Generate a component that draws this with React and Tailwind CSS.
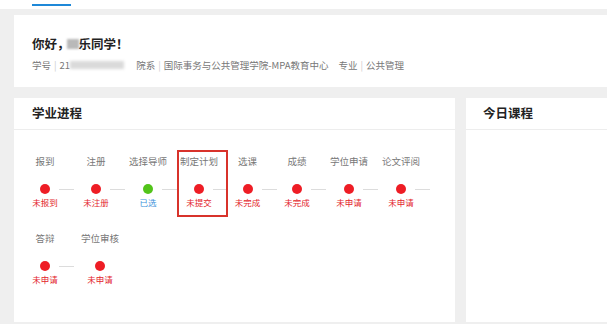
import React from 'react';

const rowOne = [
  { label: '报到', status: '未报到', w: 'w-[50px]', state: 'todo' },
  { label: '注册', status: '未注册', w: 'w-[52px]', state: 'todo' },
  { label: '选择导师', status: '已选', w: 'w-[52px]', state: 'done' },
  { label: '制定计划', status: '未提交', w: 'w-[50px]', state: 'todo' },
  { label: '选课', status: '未完成', w: 'w-[47px]', state: 'todo' },
  { label: '成绩', status: '未完成', w: 'w-[52px]', state: 'todo' },
  { label: '学位申请', status: '未申请', w: 'w-[52px]', state: 'todo' },
  { label: '论文评阅', status: '未申请', w: 'w-[52px]', state: 'todo' },
];

const rowTwo = [
  { label: '答辩', status: '未申请', w: 'w-[50px]', state: 'todo' },
  { label: '学位审核', status: '未申请', w: 'w-[60px]', state: 'todo', last: true },
];

const Step = ({ step }) => {
  const done = step.state === 'done';
  return (
    <div className={`${step.w} shrink-0 flex flex-col items-center`}>
      <div className="h-[14px] leading-[14px] text-[9.5px] text-[#777] whitespace-nowrap">{step.label}</div>
      {/* dot with connector to the right */}
      <div className="mt-[16px] w-full h-[10px] grid grid-cols-[minmax(0,1fr)_10px_minmax(0,1fr)]">
        <div />
        <div className={`w-[10px] h-[10px] rounded-full ${done ? 'bg-[#52c41a]' : 'bg-[#ee1d25]'}`} />
        <div className="flex items-center overflow-visible">
          {!step.last && <div className="ml-[9px] w-[15px] h-px shrink-0 bg-[#dcdcdc]" />}
        </div>
      </div>
      <div
        className={`mt-[2px] h-[12px] leading-[12px] text-[8.5px] whitespace-nowrap ${
          done ? 'text-[#3d8fd9]' : 'text-[#e3262c]'
        }`}
      >
        {step.status}
      </div>
    </div>
  );
};

export default function App() {
  return (
    <div className="w-full h-[324px] overflow-hidden bg-[#efefef] font-['Noto_Sans_CJK_SC',sans-serif]">
      {/* top tab strip */}
      <div className="h-[9px] bg-white pl-[32px] pt-[4px]">
        <div className="w-[39px] h-[2px] bg-[#1e88d8]" />
      </div>

      <div className="pl-[14px] pt-[6px]">
        {/* greeting card */}
        <div className="h-[72px] bg-white pl-[18px] pt-[21px]">
          <div className="flex items-center h-[15px] leading-[15px] text-[12.5px] font-bold text-[#222]">
            <span>你好，</span>
            <span className="w-[12px] h-[10px] bg-[#b9b9b9] blur-[1px] -ml-[3px]" />
            <span>乐同学！</span>
          </div>
          <div className="mt-[8px] flex items-center h-[12px] leading-[12px] text-[9.5px] text-[#777] whitespace-nowrap">
            <span>学号</span>
            <span className="mx-[3px] text-[#ccc]">|</span>
            <span>21</span>
            <span className="w-[54px] h-[8px] bg-[#dadada] blur-[1.5px]" />
            <span className="ml-[12px]">院系</span>
            <span className="mx-[3px] text-[#ccc]">|</span>
            <span>国际事务与公共管理学院-MPA教育中心</span>
            <span className="ml-[10px]">专业</span>
            <span className="mx-[3px] text-[#ccc]">|</span>
            <span>公共管理</span>
          </div>
        </div>

        <div className="mt-[11px] flex gap-[11px]">
          {/* academic progress */}
          <div className="relative w-[441px] h-[224px] bg-white">
            <div className="h-[32px] border-b border-[#ededed] pl-[18px] flex items-center">
              <span className="text-[12.5px] font-bold text-[#222]">学业进程</span>
            </div>
            <div className="pl-[6px] pt-[24px]">
              <div className="flex">
                {rowOne.map((s) => (
                  <Step key={s.label} step={s} />
                ))}
              </div>
              <div className="flex mt-[23px]">
                {rowTwo.map((s) => (
                  <Step key={s.label} step={s} />
                ))}
              </div>
            </div>
            {/* highlight annotation */}
            <div className="absolute left-[163px] top-[52px] w-[51px] h-[67px] border-2 border-[#d8332b] pointer-events-none" />
          </div>

          {/* today's courses */}
          <div className="flex-1 h-[224px] bg-white">
            <div className="h-[32px] border-b border-[#ededed] pl-[17px] flex items-center">
              <span className="text-[12.5px] font-bold text-[#222]">今日课程</span>
            </div>
          </div>
        </div>
      </div>
    </div>
  );
}
